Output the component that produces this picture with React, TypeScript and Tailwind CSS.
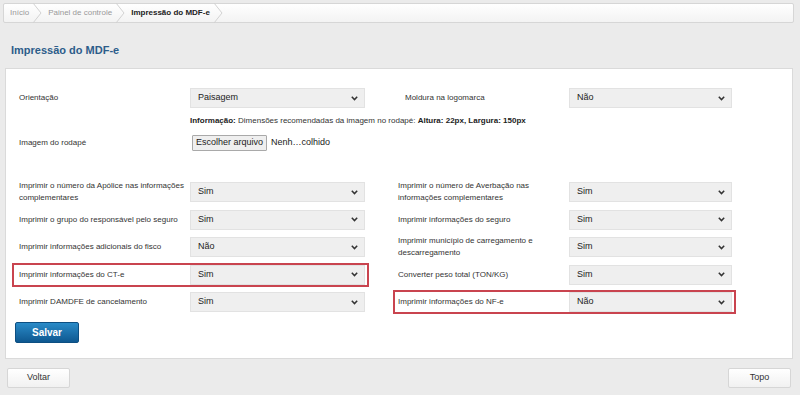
import React from "react";

const Chevron = () => (
  <svg width="7" height="5" viewBox="0 0 7 5" className="shrink-0">
    <polyline points="0.8,0.8 3.5,3.6 6.2,0.8" fill="none" stroke="#333" strokeWidth="1.5" />
  </svg>
);

const Select = ({ value, w }: { value: string; w: string }) => (
  <div
    className={`${w} h-[20px] shrink-0 flex items-center justify-between bg-[#efefef] border border-[#e2e2e2] pl-[7px] pr-[6px] text-[9px] text-[#222]`}
  >
    <span>{value}</span>
    <Chevron />
  </div>
);

type CellProps = { label: React.ReactNode; value: string; side: "l" | "r"; red?: boolean; indent?: boolean };

const Cell = ({ label, value, side, red, indent }: CellProps) => (
  <div
    className={`h-[24px] flex items-center border-2 pr-[2px] ${red ? "border-[#c9444f]" : "border-transparent"} ${
      side === "l" ? "pl-[5px]" : "pl-[3px]"
    }`}
  >
    <div className={`w-[171px] shrink-0 text-[8px] leading-[12px] text-[#333] pr-[6px] ${indent ? "pl-[7px]" : ""}`}>
      {label}
    </div>
    <Select value={value} w={side === "l" ? "w-[175px]" : "w-[163px]"} />
  </div>
);

const Crumb = ({ children, bold }: { children: React.ReactNode; bold?: boolean }) => (
  <div className="flex items-center h-full">
    <span className={`text-[8px] ${bold ? "font-bold text-[#222]" : "text-[#999]"}`}>{children}</span>
    <svg width="10" height="20" viewBox="0 0 10 20" className="ml-[3px] mr-[6px]">
      <polyline points="1,0 9,10 1,20" fill="none" stroke="#d2d2d2" strokeWidth="1" />
    </svg>
  </div>
);

export default function App() {
  return (
    <div className="w-[800px] h-[395px] overflow-hidden bg-[#ebebeb] pt-[3px] font-['Liberation_Sans',Arial,sans-serif]">
      {/* breadcrumb */}
      <div className="ml-[3px] w-[791px] h-[20px] rounded-[2px] border border-[#d6d6d6] bg-gradient-to-b from-[#ffffff] to-[#f3f3f3] flex items-center pl-[6px]">
        <Crumb>Início</Crumb>
        <Crumb>Painel de controle</Crumb>
        <Crumb bold>Impressão do MDF-e</Crumb>
      </div>

      {/* title */}
      <div className="mt-[20px] ml-[11px] h-[14px] leading-[14px] text-[11px] font-bold text-[#2d5d8a]">Impressão do MDF-e</div>

      {/* panel */}
      <div className="mt-[11px] ml-[5px] w-[788px] bg-white border border-[#dadada] pl-[6px] pt-[17px] pb-[15px]">
        <div className="grid grid-cols-[357px_343px] gap-x-[24px]">
          <Cell side="l" label="Orientação" value="Paisagem" />
          <Cell side="r" label="Moldura na logomarca" value="Não" indent />
        </div>
        <div className="mt-[5px] pl-[178px] h-[12px] leading-[12px] text-[8px] text-[#333]">
          <b className="text-[#222]">Informação:</b> Dimensões recomendadas da imagem no rodapé:{" "}
          <b className="text-[#222]">Altura: 22px, Largura: 150px</b>
        </div>
        <div className="mt-[4px] h-[24px] flex items-center border-2 border-transparent pl-[5px]">
          <div className="w-[171px] shrink-0 text-[8px] text-[#333]">Imagem do rodapé</div>
          <div className="flex items-center ml-[2px]">
            <div className="h-[16px] px-[3px] flex items-center border border-[#a9a9a9] bg-[#efefef] rounded-[1px] text-[9px] text-[#222]">
              Escolher arquivo
            </div>
            <span className="ml-[4px] text-[9px] text-[#222]">Nenh…colhido</span>
          </div>
        </div>

        <div className="mt-[25px] grid grid-cols-[357px_343px] gap-x-[24px] gap-y-[3.5px]">
          <Cell side="l" label="Imprimir o número da Apólice nas informações complementares" value="Sim" />
          <Cell side="r" label="Imprimir o número de Averbação nas informações complementares" value="Sim" />
          <Cell side="l" label="Imprimir o grupo do responsável pelo seguro" value="Sim" />
          <Cell side="r" label="Imprimir informações do seguro" value="Sim" />
          <Cell side="l" label="Imprimir informações adicionais do fisco" value="Não" />
          <Cell side="r" label="Imprimir município de carregamento e descarregamento" value="Sim" />
          <Cell side="l" label="Imprimir informações do CT-e" value="Sim" red />
          <Cell side="r" label="Converter peso total (TON/KG)" value="Sim" />
          <Cell side="l" label="Imprimir DAMDFE de cancelamento" value="Sim" />
          <Cell side="r" label="Imprimir informações do NF-e" value="Não" red />
        </div>

        <button className="mt-[8px] ml-[3px] w-[64px] h-[21px] rounded-[2px] bg-gradient-to-b from-[#2a8bc8] to-[#0e5890] border border-[#0d4f82] text-white text-[10px] font-bold flex items-center justify-center">
          Salvar
        </button>
      </div>

      {/* bottom buttons */}
      <div className="mt-[9px] pl-[7px] pr-[9px] flex justify-between">
        <button className="w-[63px] h-[20px] rounded-[2px] border border-[#d6d6d6] bg-gradient-to-b from-[#ffffff] to-[#f1f1f1] text-[9px] text-[#333] flex items-center justify-center">
          Voltar
        </button>
        <button className="w-[63px] h-[20px] rounded-[2px] border border-[#d6d6d6] bg-gradient-to-b from-[#ffffff] to-[#f1f1f1] text-[9px] text-[#333] flex items-center justify-center">
          Topo
        </button>
      </div>
    </div>
  );
}
